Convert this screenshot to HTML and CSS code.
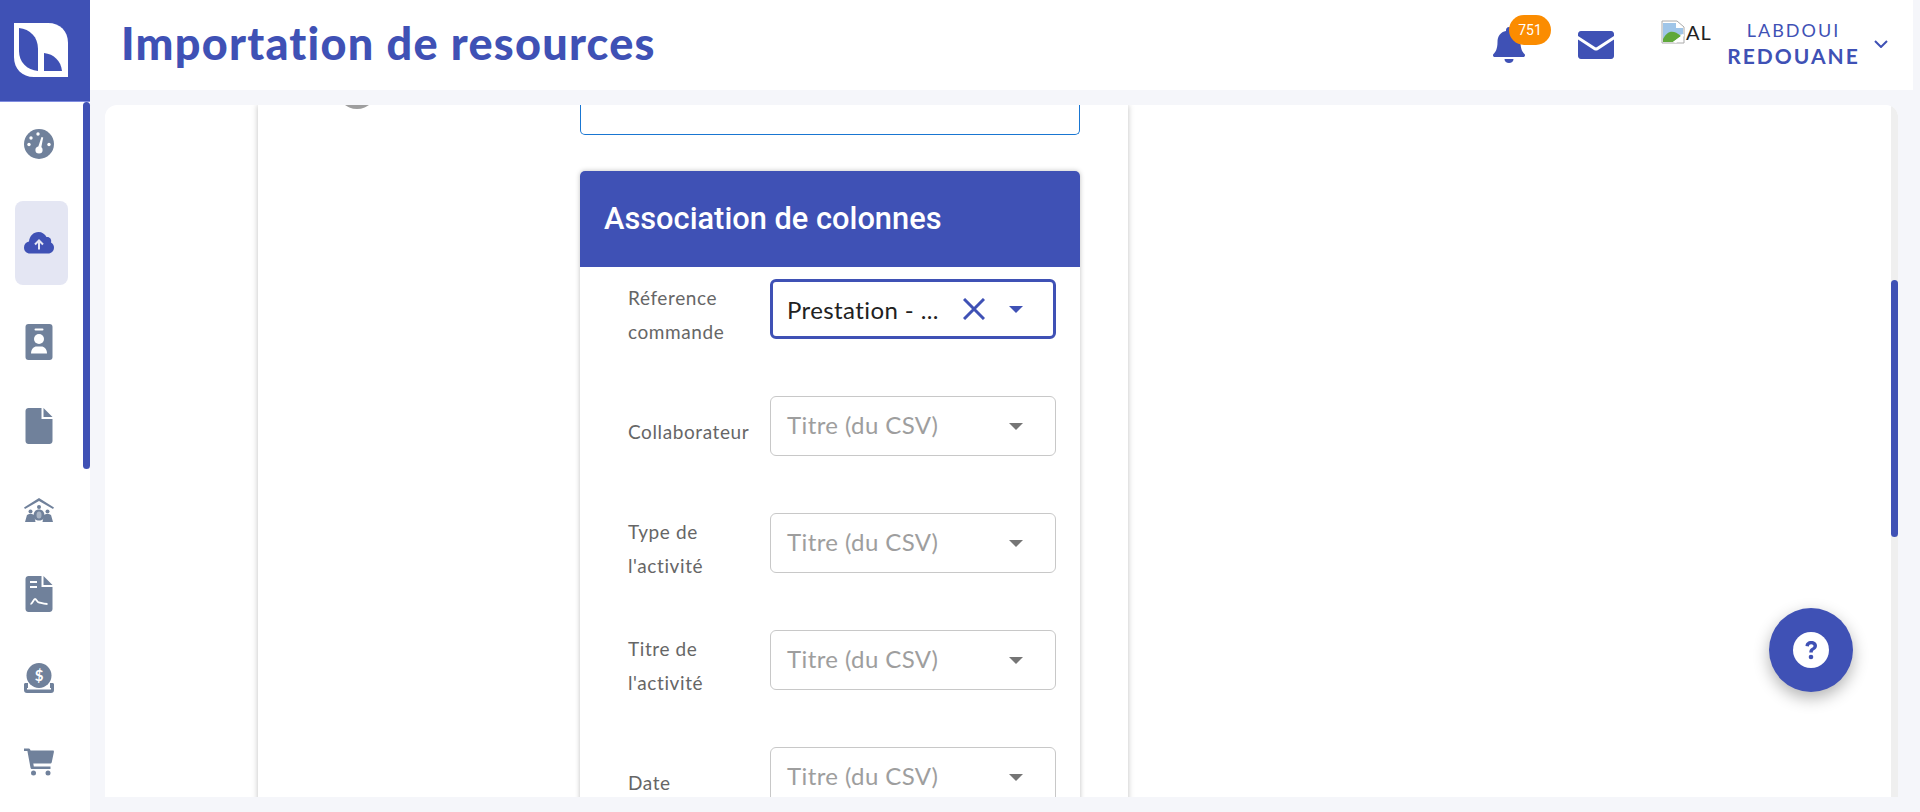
FILE: index.html
```html
<!DOCTYPE html>
<html lang="fr">
<head>
    <meta charset="UTF-8">
    <meta name="viewport" content="width=device-width, initial-scale=1.0">
    <title>Importation de resources</title>
    <link rel="stylesheet" href="styles.css">
</head>
<body>
    <aside class="sidebar">
        <div class="logo">
            <svg viewBox="0 0 54 54" width="54" height="54">
                <path fill="#fff" d="M0 0H34C46 0 54 8 54 20V54H20C8 54 0 46 0 34Z"/>
                <path fill="#3f51b5" d="M5 5C16 6 24 14 24 26V48C13 47 5 39 5 28Z"/>
                <path fill="#3f51b5" d="M30 30C40 31 47 38 48 48H30Z"/>
            </svg>
        </div>
        <nav class="nav">
            <div class="nav-thumb"></div>
            <a class="nav-item spaced">
                <svg class="nav-icon" viewBox="0 0 30 30">
                    <circle cx="15" cy="15" r="15"/>
                    <circle cx="15" cy="21" r="3.6" fill="#fff"/>
                    <path d="M13.500 20L17.500 8L19.200 8.500L16.800 21Z" fill="#fff"/>
                    <circle cx="14" cy="5" r="1.700" fill="#fff"/>
                    <circle cx="7" cy="9" r="1.700" fill="#fff"/>
                    <circle cx="5" cy="15.500" r="1.700" fill="#fff"/>
                    <circle cx="25" cy="15.500" r="1.700" fill="#fff"/>
                </svg>
            </a>
            <a class="nav-item spaced active">
                <svg class="nav-icon" viewBox="0 0 30 22">
                    <path d="M6 21.500C2.500 21.500 0 19 0 15.500C0 12.500 2 10 5 9.500C5.500 4 9.500 0 14.500 0C18 0 21 2 22.500 5C25.500 4.500 28 7 27 10.500C29 11.500 30 13.500 30 15.500C30 19 27.500 21.500 24 21.500Z"/>
                    <path d="M15 17.500V8.500M11 12.500L15 8.500L19 12.500" fill="none" stroke="#e4e6f3" stroke-width="2"/>
                </svg>
            </a>
            <a class="nav-item">
                <svg class="nav-icon" viewBox="0 0 27 36">
                    <rect width="27" height="36" rx="3"/>
                    <rect x="9" y="4.500" width="9" height="2" rx="1" fill="#fff"/>
                    <circle cx="13.500" cy="15" r="5" fill="#fff"/>
                    <path d="M5.500 29.500C5.500 25 8.500 22.500 11 22.500H16C18.500 22.500 21.500 25 21.500 29.500Z" fill="#fff"/>
                </svg>
            </a>
            <a class="nav-item">
                <svg class="nav-icon" viewBox="0 0 27 36">
                    <path d="M3 0H16V11H27V33C27 35 25.500 36 24 36H3C1.500 36 0 35 0 33V3C0 1 1.500 0 3 0Z"/>
                    <path d="M18 0L27 9H18Z"/>
                </svg>
            </a>
            <a class="nav-item">
                <svg class="nav-icon" viewBox="0 0 30 24">
                    <path d="M0 9.500L15 0L30 9.500L29 11L15 3L1 11Z"/>
                    <circle cx="15" cy="9" r="2"/>
                    <path d="M9.500 18C9.500 13.500 12 11.500 15 11.500C18 11.500 20.500 13.500 20.500 18C20.500 21 18 22.500 15 22.500C12 22.500 9.500 21 9.500 18Z"/>
                    <ellipse cx="15" cy="17" rx="2.500" ry="3.500" fill="#a9b4c4"/>
                    <circle cx="6.500" cy="13.500" r="2"/>
                    <circle cx="23.500" cy="13.500" r="2"/>
                    <path d="M1 24L3 17C4 15.500 9 15.500 10 17L11.500 24Z"/>
                    <path d="M18.500 24L20 17C21 15.500 26 15.500 27 17L29 24Z"/>
                </svg>
            </a>
            <a class="nav-item">
                <svg class="nav-icon" viewBox="0 0 27 36">
                    <path d="M3 0H16V11H27V33C27 35 25.500 36 24 36H3C1.500 36 0 35 0 33V3C0 1 1.500 0 3 0Z"/>
                    <path d="M18 0L27 9H18Z"/>
                    <rect x="4.500" y="5" width="7" height="2" fill="#fff"/>
                    <rect x="4.500" y="10" width="7" height="2" fill="#fff"/>
                    <path d="M5 28C7 28 8 23 9.500 23C11 23 11.500 26.500 13.500 26.500C15.500 26.500 16 28 22 28" fill="none" stroke="#fff" stroke-width="1.800"/>
                </svg>
            </a>
            <a class="nav-item">
                <svg class="nav-icon" viewBox="0 0 30 30">
                    <circle cx="15" cy="12.500" r="12.500"/>
                    <path d="M0 21.500C0 20.500 .7 20 1.500 20H4V25H26V20H28.500C29.300 20 30 20.500 30 21.500V27C30 29 29 30 27 30H3C1 30 0 29 0 27Z"/>
                    <rect x="3" y="25" width="24" height="1.500" fill="#fff"/>
                    <text x="15" y="17.500" class="dollar">$</text>
                </svg>
            </a>
            <a class="nav-item">
                <svg class="nav-icon" viewBox="0 0 30 27">
                    <path d="M0 0H4.500C5.500 0 6 .5 6.300 1.500L6.600 2H29C29.800 2 30 2.700 29.900 3.400L27.800 13.500C27.600 14.500 27 15 26 15H9.300L9.800 18H26.500V20.500H8C7.200 20.500 6.700 20 6.500 19.200L3.400 2.500H0Z"/>
                    <circle cx="9.500" cy="24.500" r="2.500"/>
                    <circle cx="24" cy="24.500" r="2.500"/>
                </svg>
            </a>
        </nav>
    </aside>

    <div class="page">
        <header class="topbar">
            <h1 class="page-title">Importation de resources</h1>
            <div class="topbar-right">
                <div class="bell">
                    <svg viewBox="0 0 32 36" width="32" height="36">
                        <path d="M16 0C18 0 19 1.500 19 3V4C24.500 5 27.500 9.500 27.500 15C27.500 22 29.500 25 31.500 27C32.500 28 32 30 30 30H2C0 30 -.5 28 .5 27C2.500 25 4.500 22 4.500 15C4.500 9.500 7.500 5 13 4V3C13 1.500 14 0 16 0Z"/>
                        <path d="M11.500 32H20.500C20.500 34.500 18.500 36 16 36C13.500 36 11.500 34.500 11.500 32Z"/>
                    </svg>
                    <span class="badge">751</span>
                </div>
                <svg class="mail" viewBox="0 0 36 28" width="36" height="28">
                    <path d="M3 0H33C35 0 36 1.500 36 3V5L19 16C18.400 16.500 17.600 16.500 17 16L0 5V3C0 1.500 1 0 3 0Z"/>
                    <path d="M0 8.500L16 19C17.200 19.700 18.800 19.700 20 19L36 8.500V25C36 26.500 35 28 33 28H3C1 28 0 26.500 0 25Z"/>
                </svg>
                <div class="avatar">
                    <svg viewBox="0 0 24 24" width="24" height="24">
                        <path fill="#fff" stroke="#aaa" d="M1 1H16L23 7V23H1Z"/>
                        <path fill="#9fc5e8" d="M2 3H15V8H22V14L2 20Z"/>
                        <path fill="#5fa83a" d="M2 19C6 11 12 9 20 16L12 22H2Z"/>
                        <path fill="#fff" d="M12 22L23 14V16L15 23Z"/>
                    </svg>
                    <span>AL</span>
                </div>
                <div class="user">
                    <span class="user-first">LABDOUI</span>
                    <span class="user-last">REDOUANE</span>
                </div>
                <svg class="chevron" viewBox="0 0 14 8" width="14" height="8">
                    <path d="M1 1L7 7L13 1" fill="none" stroke-width="2"/>
                </svg>
            </div>
        </header>

        <main class="panel">
            <div class="panel-scroll">
                <div class="sheet">
                    <div class="stepper"><div class="step-dot"></div></div>
                    <div class="form-col">
                        <div class="upload-box"></div>
                        <section class="card">
                            <h2 class="card-title">Association de colonnes</h2>
                            <div class="card-body">
                                <div class="row">
                                    <label class="row-label">Réference commande</label>
                                    <div class="select focused">
                                        <span class="select-value">Prestation - ...</span>
                                        <svg class="clear" viewBox="0 0 22 22" width="22" height="22"><path d="M1 1L21 21M21 1L1 21" fill="none" stroke-width="3"/></svg>
                                        <span class="caret"></span>
                                    </div>
                                </div>
                                <div class="row">
                                    <label class="row-label single">Collaborateur</label>
                                    <div class="select"><span class="select-placeholder">Titre (du CSV)</span><span class="caret"></span></div>
                                </div>
                                <div class="row">
                                    <label class="row-label">Type de l'activité</label>
                                    <div class="select"><span class="select-placeholder">Titre (du CSV)</span><span class="caret"></span></div>
                                </div>
                                <div class="row">
                                    <label class="row-label">Titre de l'activité</label>
                                    <div class="select"><span class="select-placeholder">Titre (du CSV)</span><span class="caret"></span></div>
                                </div>
                                <div class="row">
                                    <label class="row-label single">Date</label>
                                    <div class="select"><span class="select-placeholder">Titre (du CSV)</span><span class="caret"></span></div>
                                </div>
                            </div>
                        </section>
                    </div>
                </div>
            </div>
            <div class="track"><div class="track-thumb"></div></div>
            <button class="help">
                <svg viewBox="0 0 36 36" width="36" height="36">
                    <circle cx="18" cy="18" r="18" fill="#fff"/>
                    <path d="M12.500 14C12.500 11 15 9 18.200 9C21.500 9 24 11 24 13.800C24 16.300 22.500 17.300 20.800 18.300C19.800 18.900 19.800 19.400 19.800 20.500H16.300C16.300 18 17 17 18.700 16C20 15.200 20.500 14.800 20.500 14C20.500 13 19.500 12.300 18.200 12.300C16.900 12.300 16 13 15.900 14.500Z" fill="#3f51b5"/>
                    <circle cx="18" cy="25" r="2.300" fill="#3f51b5"/>
                </svg>
            </button>
        </main>
    </div>
</body>
</html>
```

FILE: styles.css
```css
* {
    box-sizing: border-box;
}
html, body {
    height: 100%;
}
body {
    margin: 0;
    display: flex;
    height: 812px;
    overflow: hidden;
    background-color: #f5f6fa;
    font-family: Lato, "Noto Sans", Arial, sans-serif;
    color: #3f51b5;
}

/* sidebar */
.sidebar {
    width: 90px;
    flex: none;
    display: flex;
    flex-direction: column;
    background-color: #fff;
}
.logo {
    height: 102px;
    padding: 23px 0 0 14px;
    background-color: #3f51b5;
    border-bottom: 1px solid #7f8ce0;
}
.logo svg {
    display: block;
}
.nav {
    position: relative;
    flex: 1;
    padding: 0 22px 0 15px;
}
.nav-thumb {
    position: absolute;
    top: 0;
    right: 0;
    width: 7px;
    height: 367px;
    border-radius: 4px;
    background-color: #3f51b5;
}
.nav-item {
    display: flex;
    align-items: center;
    justify-content: center;
    height: 84px;
    padding-right: 5px;
    border-radius: 8px;
}
.nav-item.spaced {
    margin-bottom: 15px;
}
.nav-item.active {
    background-color: #e4e6f3;
}
.nav-icon {
    width: 30px;
    height: 36px;
    fill: #70819b;
}
.nav-item.active .nav-icon {
    fill: #3f51b5;
}
.dollar {
    font-size: 15px;
    font-weight: 700;
    text-anchor: middle;
    fill: #fff;
}

/* top bar */
.page {
    flex: 1;
    min-width: 0;
    display: flex;
    flex-direction: column;
}
.topbar {
    height: 90px;
    flex: none;
    display: flex;
    align-items: center;
    justify-content: space-between;
    margin-right: 7px;
    padding: 0 25px 0 31px;
    background-color: #fff;
}
.page-title {
    margin: -4px 0 0;
    font-size: 45px;
    font-weight: 900;
    letter-spacing: 1.250px;
    color: #3f51b5;
}
.topbar-right {
    display: flex;
    align-items: center;
}
.bell {
    position: relative;
    width: 32px;
    height: 36px;
    fill: #3f51b5;
}
.bell svg {
    display: block;
}
.badge {
    position: absolute;
    top: -12px;
    left: 16px;
    width: 42px;
    height: 30px;
    border-radius: 15px;
    background-color: #fb8c00;
    color: #fff;
    font-family: Roboto, sans-serif;
    font-size: 14px;
    line-height: 30px;
    text-align: center;
}
.mail {
    margin-left: 53px;
    fill: #3f51b5;
}
.avatar {
    display: flex;
    align-items: center;
    width: 53px;
    height: 26px;
    margin-left: 47px;
    margin-top: -27px;
    color: #222;
    font-size: 20px;
    letter-spacing: 1px;
}
.avatar svg {
    flex: none;
    margin-right: 1px;
}
.user {
    display: flex;
    flex-direction: column;
    align-items: center;
    width: 131px;
    margin-left: 14px;
    margin-top: -4px;
    color: #3f51b5;
}
.user-first {
    font-size: 18px;
    letter-spacing: 2px;
    line-height: 26px;
}
.user-last {
    font-size: 21px;
    font-weight: 700;
    letter-spacing: 2px;
    line-height: 26px;
}
.chevron {
    margin-left: 15px;
    margin-top: -2px;
    stroke: #3f51b5;
}

/* panel */
.panel {
    position: relative;
    flex: 1;
    min-height: 0;
    display: flex;
    margin: 15px 22px 15px 15px;
    border-radius: 12px 12px 0 0;
    overflow: hidden;
    background-color: #fff;
}
.panel-scroll {
    flex: 1;
    min-width: 0;
    overflow: hidden;
}
.sheet {
    display: flex;
    width: 870px;
    min-height: 800px;
    margin-left: 153px;
    background-color: #fff;
    box-shadow: 0 0 6px rgba(0, 0, 0, 0.25);
}
.stepper {
    width: 322px;
    flex: none;
    padding-left: 79px;
}
.step-dot {
    width: 40px;
    height: 40px;
    margin-top: -36px;
    border-radius: 50%;
    background-color: #9e9e9e;
}
.form-col {
    width: 500px;
    flex: none;
}
.upload-box {
    height: 30px;
    border: 1px solid #1976d2;
    border-top: none;
    border-radius: 0 0 5px 5px;
}
.card {
    margin-top: 36px;
    border-radius: 5px;
    box-shadow: 0 0 5px rgba(0, 0, 0, 0.25);
}
.card-title {
    height: 96px;
    margin: 0;
    padding: 0 24px;
    border-radius: 5px 5px 0 0;
    background-color: #3f51b5;
    color: #fff;
    font-family: Roboto, sans-serif;
    font-size: 30.800px;
    font-weight: 500;
    line-height: 96px;
}
.card-body {
    padding: 12px 24px 0 48px;
}
.row {
    display: flex;
    align-items: flex-start;
    height: 117px;
}
.row-label {
    width: 142px;
    flex: none;
    padding-right: 30px;
    padding-top: 2px;
    color: #666;
    font-size: 19px;
    letter-spacing: .6px;
    line-height: 33.600px;
}
.row-label.single {
    padding-top: 19px;
}
.select {
    flex: 1;
    display: flex;
    align-items: center;
    height: 60px;
    padding: 0 32px 0 16px;
    border: 1px solid #c8c8c8;
    border-radius: 6px;
    font-size: 24px;
    letter-spacing: .4px;
}
.select.focused {
    border: 3px solid #3f51b5;
    padding-left: 14px;
    padding-right: 30px;
}
.select-value {
    flex: 1;
    color: #212121;
}
.select-placeholder {
    flex: 1;
    padding-bottom: 3px;
    color: #9e9e9e;
}
.clear {
    stroke: #3f51b5;
    margin-right: 24px;
}
.caret {
    width: 0;
    height: 0;
    border-left: 7px solid transparent;
    border-right: 7px solid transparent;
    border-top: 7px solid #757575;
}
.focused .caret {
    border-top-color: #3f51b5;
}

/* scrollbar of the panel */
.track {
    width: 7px;
    flex: none;
    background-color: #efefef;
}
.track-thumb {
    width: 7px;
    height: 257px;
    margin-top: 175px;
    border-radius: 4px;
    background-color: #3f51b5;
}

.help {
    position: absolute;
    right: 45px;
    bottom: 105px;
    display: flex;
    align-items: center;
    justify-content: center;
    width: 84px;
    height: 84px;
    padding: 0;
    border: none;
    border-radius: 50%;
    background-color: #3f51b5;
    box-shadow: 0 6px 16px rgba(0, 0, 0, 0.3);
}
```
